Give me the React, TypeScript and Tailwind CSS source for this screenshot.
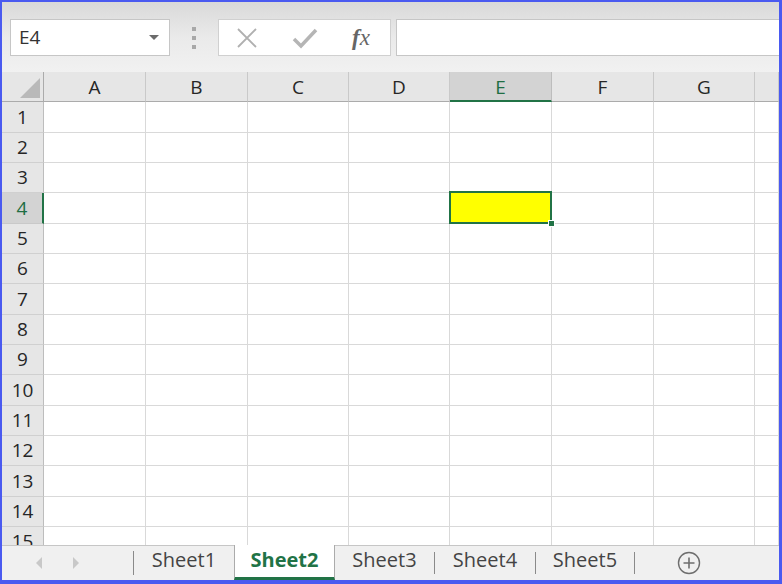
import React from "react";

const cols = ["A", "B", "C", "D", "E", "F", "G", ""];
const rowHeights = ["h-[31px]", "h-[30px]", "h-[30px]", "h-[31px]", "h-[30px]", "h-[30px]", "h-[31px]", "h-[30px]", "h-[30px]", "h-[31px]", "h-[30px]", "h-[30px]", "h-[31px]", "h-[30px]", "h-[30px]"];

function HeaderRow() {
  return (
    <>
      <div className="h-[30px] bg-[#e6e6e6] border-r border-b border-[#ababab] relative">
        <div className="absolute right-[3px] bottom-[3px] w-0 h-0 border-l-[20px] border-l-transparent border-b-[20px] border-b-[#b9b9b9]" />
      </div>
      {cols.map((c, i) =>
        c === "E" ? (
          <div key={i} className="h-[30px] bg-[#d3d3d3] border-r border-[#bdbdbd] border-b-2 border-b-[#217346] flex items-center justify-center text-[19px] text-[#1f6e43] pt-[2px]">
            {c}
          </div>
        ) : (
          <div key={i} className="h-[30px] bg-[#e6e6e6] border-r border-[#c9c9c9] border-b border-b-[#ababab] flex items-center justify-center text-[19px] text-[#262626] pt-[2px]">
            {c}
          </div>
        )
      )}
    </>
  );
}

export default function App() {
  return (
    <div className="w-[782px] h-[584px] border-l-2 border-t-2 border-r-[3px] border-b-4 border-[#4a5af0] flex flex-col overflow-hidden font-['Open_Sans',sans-serif] bg-white">
      {/* Toolbar */}
      <div className="h-[70px] shrink-0 bg-gradient-to-b from-[#d9d9d9] via-[#eaeaea] to-[#f1f1f1] flex items-start pt-[17px] pl-[8px]">
        <div className="w-[160px] h-[37px] bg-white border border-[#c6c6c6] flex items-center pl-[8px] pr-[10px]">
          <span className="text-[19px] text-[#333] flex-1">E4</span>
          <div className="w-0 h-0 border-l-[5px] border-r-[5px] border-t-[5px] border-l-transparent border-r-transparent border-t-[#6b6b6b]" />
        </div>
        <div className="w-[48px] h-[37px] flex flex-col items-center justify-center gap-[5px]">
          <div className="w-[4px] h-[4px] bg-[#a8a8a8]" />
          <div className="w-[4px] h-[4px] bg-[#a8a8a8]" />
          <div className="w-[4px] h-[4px] bg-[#a8a8a8]" />
        </div>
        <div className="w-[173px] h-[37px] bg-white border border-[#d0d0d0] flex items-center">
          <div className="w-[55px] flex justify-center">
            <svg width="22" height="22" viewBox="0 0 22 22">
              <path d="M2 2 L20 20 M20 2 L2 20" stroke="#b0b0b0" strokeWidth="1.8" fill="none" />
            </svg>
          </div>
          <div className="w-[62px] flex justify-center">
            <svg width="26" height="22" viewBox="0 0 26 22">
              <path d="M2 12 L9 19 L24 3" stroke="#b5b5b5" strokeWidth="3.5" fill="none" />
            </svg>
          </div>
          <div className="w-[50px] flex justify-center">
            <span className="font-['Liberation_Serif',serif] italic text-[23px] text-[#666] leading-none">
              <span className="font-bold">f</span>x
            </span>
          </div>
        </div>
        <div className="ml-[5px] flex-1 h-[37px] bg-white border-l border-t border-b border-[#c6c6c6]" />
      </div>

      {/* Grid */}
      <div className="flex-1 overflow-hidden">
        <div className="grid grid-cols-[42px_102px_102px_101px_101px_102px_102px_101px_1fr]">
          <HeaderRow />
          {rowHeights.map((h, r) => {
            const sel = r === 3;
            return (
              <React.Fragment key={r}>
                {sel ? (
                  <div className={`${h} bg-[#d3d3d3] border-r-2 border-r-[#217346] border-b border-b-[#c9c9c9] flex items-center justify-center text-[19px] text-[#1f6e43]`}>
                    {r + 1}
                  </div>
                ) : (
                  <div className={`${h} bg-[#e6e6e6] border-r border-r-[#bdbdbd] border-b border-b-[#d0d0d0] flex items-center justify-center text-[19px] text-[#262626]`}>
                    {r + 1}
                  </div>
                )}
                {cols.map((c, i) => (
                  <div key={i} className={`${h} border-r border-b border-[#d9d9d9] relative`}>
                    {sel && c === "E" && (
                      <div className="absolute -left-[1px] -top-[2px] -right-[1px] -bottom-[1px] bg-[#ffff00] border-2 border-[#217346] z-10">
                        <div className="absolute -right-[5px] -bottom-[5px] w-[7px] h-[7px] bg-[#217346] border border-white" />
                      </div>
                    )}
                  </div>
                ))}
              </React.Fragment>
            );
          })}
        </div>
      </div>

      {/* Sheet tabs */}
      <div className="h-[35px] shrink-0 bg-[#f0f0f0] border-t border-[#c6c6c6] flex items-stretch">
        <div className="w-[131px] flex items-center pl-[34px] gap-[31px]">
          <div className="w-0 h-0 border-t-[6px] border-b-[6px] border-r-[6px] border-t-transparent border-b-transparent border-r-[#c8c8c8]" />
          <div className="w-0 h-0 border-t-[6px] border-b-[6px] border-l-[6px] border-t-transparent border-b-transparent border-l-[#c8c8c8]" />
        </div>
        <div className="w-[1px] bg-[#8a8a8a] my-[5px]" />
        <div className="w-[100px] flex items-center justify-center text-[20px] text-[#444] pb-[6px]">Sheet1</div>
        <div className="w-[101px] -mt-px bg-white border-l border-r border-[#ababab] border-b-[3px] border-b-[#217346] flex items-center justify-center text-[20px] font-bold text-[#217346] pb-[3px]">Sheet2</div>
        <div className="w-[99px] flex items-center justify-center text-[20px] text-[#444] pb-[6px]">Sheet3</div>
        <div className="w-[1px] bg-[#8a8a8a] my-[6px]" />
        <div className="w-[100px] flex items-center justify-center text-[20px] text-[#444] pb-[6px]">Sheet4</div>
        <div className="w-[1px] bg-[#8a8a8a] my-[6px]" />
        <div className="w-[98px] flex items-center justify-center text-[20px] text-[#444] pb-[6px]">Sheet5</div>
        <div className="w-[1px] bg-[#8a8a8a] my-[6px]" />
        <div className="w-[108px] flex items-center justify-center">
          <svg width="24" height="24" viewBox="0 0 24 24">
            <circle cx="12" cy="12" r="10.5" stroke="#6e6e6e" strokeWidth="1.4" fill="none" />
            <path d="M12 6.5 V17.5 M6.5 12 H17.5" stroke="#6e6e6e" strokeWidth="1.6" />
          </svg>
        </div>
      </div>
    </div>
  );
}
